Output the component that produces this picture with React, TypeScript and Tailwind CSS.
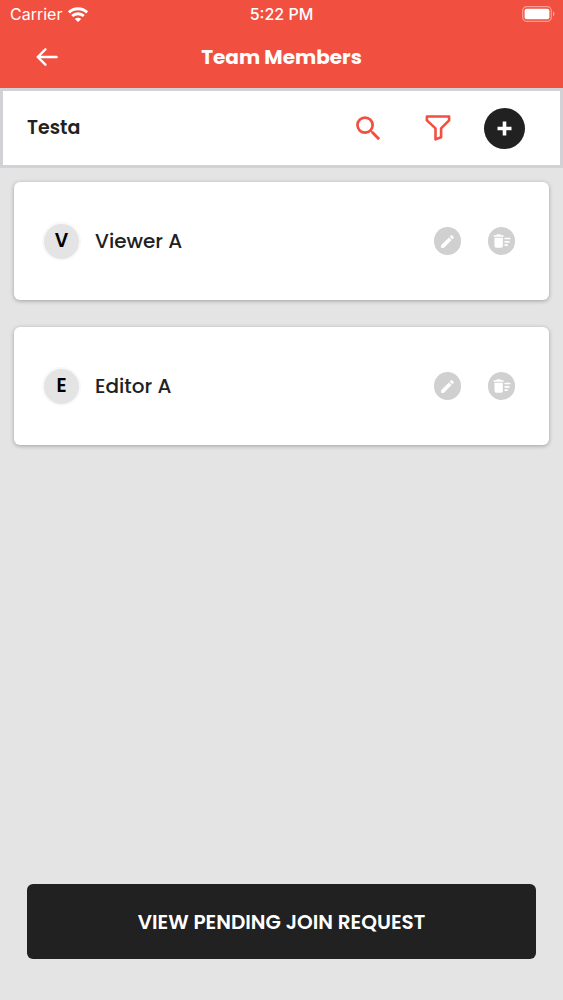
import { MdDeleteSweep, MdEdit, MdSearch } from "react-icons/md";

interface Member {
  id: number;
  name: string;
}

const members: Member[] = [
  { id: 1, name: "Viewer A" },
  { id: 2, name: "Editor A" },
];

const WifiIcon = () => (
  <svg viewBox="0 0 20 15" className="h-[15px] w-5" fill="none" aria-hidden="true">
    <path
      d="M.9 5.4C6 .4 14 .4 19.1 5.4M4.2 9c3.3-3.1 8.3-3.1 11.6 0"
      stroke="white"
      strokeWidth="3"
    />
    <path d="M10 15l-3.2-3.1c1.8-1.7 4.6-1.7 6.4 0z" fill="white" />
  </svg>
);

const BatteryIcon = () => (
  <svg viewBox="0 0 33 16" className="h-4 w-[33px]" fill="none" aria-hidden="true">
    <rect x=".7" y=".7" width="28.6" height="14.6" rx="4" stroke="white" strokeOpacity=".45" strokeWidth="1.2" />
    <rect x="2.6" y="2.8" width="24.8" height="10.4" rx="2" fill="white" />
    <path d="M31 5.6c1.9.6 1.9 4.2 0 4.8z" fill="white" fillOpacity=".5" />
  </svg>
);

const BackIcon = () => (
  <svg viewBox="0 0 22 18" className="h-[18px] w-[22px]" fill="none" aria-hidden="true">
    <path
      d="M9.4 1.3L1.7 9l7.7 7.7M2 9h18.6"
      stroke="white"
      strokeWidth="2.4"
      strokeLinecap="round"
      strokeLinejoin="round"
    />
  </svg>
);

const FunnelIcon = () => (
  <svg viewBox="0 0 26 26" className="size-[26px]" fill="none" aria-hidden="true">
    <path
      d="M1.9 1.5h22.2v3.9l-8 8v8.9l-5.6 2.1v-11l-8.6-8z"
      stroke="currentColor"
      strokeWidth="2.6"
      strokeLinejoin="round"
    />
  </svg>
);

const StatusBar = () => (
  <div className="grid h-7 grid-cols-3 items-center px-[10px] font-['Inter',sans-serif] text-base leading-7">
    <div className="flex items-center gap-[6px]">
      <span>Carrier</span>
      <WifiIcon />
    </div>
    <span className="text-center font-medium">5:22 PM</span>
    <div className="-mr-[2px] flex justify-end">
      <BatteryIcon />
    </div>
  </div>
);

const MemberCard = ({ member }: { member: Member }) => (
  <li className="flex h-[118px] items-center rounded-md bg-white pr-[34px] pl-[30px] shadow-[0_1px_4px_rgba(0,0,0,0.3)]">
    <span className="flex size-[35px] items-center justify-center rounded-full bg-[#e4e4e4] text-[19px] font-semibold text-black ring-2 ring-[#f8f8f8]">
      {member.name.charAt(0)}
    </span>
    <span className="ml-4 text-xl font-medium">{member.name}</span>
    <div className="ml-auto flex gap-[27px]">
      <button
        type="button"
        aria-label={`Edit ${member.name}`}
        className="flex h-7 w-[27px] items-center justify-center rounded-full bg-[#d0d0d0] text-white"
      >
        <MdEdit className="size-[17px]" />
      </button>
      <button
        type="button"
        aria-label={`Delete ${member.name}`}
        className="flex h-7 w-[27px] items-center justify-center rounded-full bg-[#d0d0d0] text-white"
      >
        <MdDeleteSweep className="size-5" />
      </button>
    </div>
  </li>
);

const App = () => {
  return (
    <div className="flex min-h-screen flex-col bg-[#e4e4e4] font-['Poppins','Inter',sans-serif] text-[#212121]">
      <header className="bg-[#f15040] text-white">
        <StatusBar />
        <div className="grid h-[60px] grid-cols-[1fr_auto_1fr] items-start">
          <button type="button" aria-label="Back" className="ml-9 flex h-[58px] w-6 items-center">
            <BackIcon />
          </button>
          <h1 className="text-xl leading-[58px] font-bold">Team Members</h1>
        </div>
      </header>

      <section className="flex h-20 items-center border-[3px] border-[#d1d1d6] bg-white pr-[35px] pl-6">
        <h2 className="text-[19px] font-semibold">Testa</h2>
        <div className="ml-auto flex items-center text-[#f15040]">
          <button type="button" aria-label="Search" className="mr-10">
            <MdSearch className="size-[33px]" />
          </button>
          <button type="button" aria-label="Filter" className="mr-[33px]">
            <FunnelIcon />
          </button>
          <button
            type="button"
            aria-label="Add member"
            className="flex size-[41px] items-center justify-center rounded-full bg-[#212121]"
          >
            <svg viewBox="0 0 15 15" className="size-[15px]" aria-hidden="true">
              <path d="M7.5 .5v14M.5 7.5h14" stroke="white" strokeWidth="3.6" />
            </svg>
          </button>
        </div>
      </section>

      <ul className="flex flex-col gap-[27px] p-[14px]">
        {members.map((member) => (
          <MemberCard key={member.id} member={member} />
        ))}
      </ul>

      <footer className="mt-auto px-[27px] pb-[41px]">
        <button
          type="button"
          className="h-[75px] w-full rounded-md bg-[#212121] text-xl font-semibold text-white"
        >
          VIEW PENDING JOIN REQUEST
        </button>
      </footer>
    </div>
  );
};

export default App;
